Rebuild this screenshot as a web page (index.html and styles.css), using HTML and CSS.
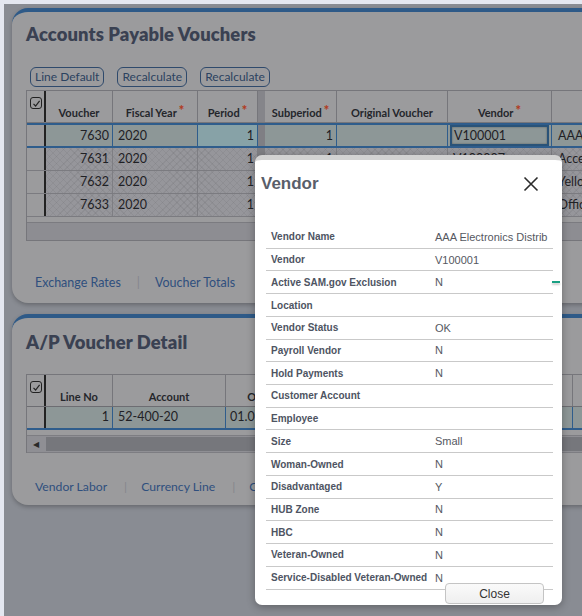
FILE: index.html
```html
<!DOCTYPE html>
<html>
<head>
<meta charset="utf-8">
<link rel="stylesheet" href="styles.css">
</head>
<body>
<div class="stage">
  <section class="panel p1">
    <h1 class="ptitle t1">Accounts Payable Vouchers</h1>
    <div class="btns">
      <button class="btn">Line Default</button>
      <button class="btn">Recalculate</button>
      <button class="btn">Recalculate</button>
    </div>
    <div class="grid g1">
      <div class="row head">
        <div class="c chk"><span class="cb"><svg width="9" height="9" viewBox="0 0 9 9"><path d="M1.5 4.8 L3.6 7 L7.6 1.8" fill="none" stroke="#222" stroke-width="1.2"/></svg></span></div>
        <div class="c w-v">Voucher</div>
        <div class="c w-fy">Fiscal Year<i>*</i></div>
        <div class="c w-p">Period<i>*</i></div>
        <div class="c split"></div>
        <div class="c w-sp">Subperiod<i>*</i></div>
        <div class="c w-ov">Original Voucher</div>
        <div class="c w-vn">Vendor<i>*</i></div>
        <div class="c w-d"></div>
      </div>
      <div class="row sel">
        <div class="c chk"></div>
        <div class="c w-v r">7630</div>
        <div class="c w-fy">2020</div>
        <div class="c w-p r cur">1</div>
        <div class="c split"></div>
        <div class="c w-sp r">1</div>
        <div class="c w-ov"></div>
        <div class="c w-vn"><span class="inp">V100001</span></div>
        <div class="c w-d pad">AAA</div>
      </div>
      <div class="row dat">
        <div class="c chk"></div>
        <div class="c w-v r">7631</div>
        <div class="c w-fy">2020</div>
        <div class="c w-p r">1</div>
        <div class="c split"></div>
        <div class="c w-sp r">1</div>
        <div class="c w-ov"></div>
        <div class="c w-vn">V100007</div>
        <div class="c w-d pad">Accessories</div>
      </div>
      <div class="row dat">
        <div class="c chk"></div>
        <div class="c w-v r">7632</div>
        <div class="c w-fy">2020</div>
        <div class="c w-p r">1</div>
        <div class="c split"></div>
        <div class="c w-sp r">1</div>
        <div class="c w-ov"></div>
        <div class="c w-vn">V100010</div>
        <div class="c w-d pad">Yellow</div>
      </div>
      <div class="row dat">
        <div class="c chk"></div>
        <div class="c w-v r">7633</div>
        <div class="c w-fy">2020</div>
        <div class="c w-p r">1</div>
        <div class="c split"></div>
        <div class="c w-sp r">1</div>
        <div class="c w-ov"></div>
        <div class="c w-vn">V100012</div>
        <div class="c w-d pad">Office</div>
      </div>
      <div class="blank"></div>
      <div class="gfoot"></div>
    </div>
    <div class="links l1">
      <a>Exchange Rates</a><span class="sep">|</span><a>Voucher Totals</a>
    </div>
  </section>

  <section class="panel p2">
    <h1 class="ptitle t2">A/P Voucher Detail</h1>
    <div class="grid g2">
      <div class="row head">
        <div class="c chk"><span class="cb"><svg width="9" height="9" viewBox="0 0 9 9"><path d="M1.5 4.8 L3.6 7 L7.6 1.8" fill="none" stroke="#222" stroke-width="1.2"/></svg></span></div>
        <div class="c w-v">Line No</div>
        <div class="c w-ac">Account</div>
        <div class="c w-or">Organization</div>
        <div class="c w-ds">Description</div>
        <div class="c w-d"></div>
      </div>
      <div class="row sel s2">
        <div class="c chk"></div>
        <div class="c w-v r">1</div>
        <div class="c w-ac">52-400-20</div>
        <div class="c w-or">01.02.03</div>
        <div class="c w-ds"></div>
        <div class="c w-d"></div>
      </div>
      <div class="hscroll"><span class="arrow">&#9664;</span><span class="thumb"></span></div>
    </div>
    <div class="links l2">
      <a>Vendor Labor</a><span class="sep">|</span><a>Currency Line</a><span class="sep">|</span><a>Commitments</a>
    </div>
  </section>

  <div class="modal">
    <div class="mhead">
      <h2 class="mtitle">Vendor</h2>
      <svg class="mx" width="16" height="16" viewBox="0 0 16 16"><path d="M1.5 1.5 L14.5 14.5 M14.5 1.5 L1.5 14.5" stroke="#2b2b2b" stroke-width="1.6" fill="none"/></svg>
    </div>
    <div class="mtable">
      <div class="mrow"><span class="ml">Vendor Name</span><span class="mv">AAA Electronics Distrib</span></div>
      <div class="mrow"><span class="ml">Vendor</span><span class="mv">V100001</span></div>
      <div class="mrow"><span class="ml">Active SAM.gov Exclusion</span><span class="mv">N</span></div>
      <div class="mrow"><span class="ml">Location</span><span class="mv"></span></div>
      <div class="mrow"><span class="ml">Vendor Status</span><span class="mv">OK</span></div>
      <div class="mrow"><span class="ml">Payroll Vendor</span><span class="mv">N</span></div>
      <div class="mrow"><span class="ml">Hold Payments</span><span class="mv">N</span></div>
      <div class="mrow"><span class="ml">Customer Account</span><span class="mv"></span></div>
      <div class="mrow"><span class="ml">Employee</span><span class="mv"></span></div>
      <div class="mrow"><span class="ml">Size</span><span class="mv">Small</span></div>
      <div class="mrow"><span class="ml">Woman-Owned</span><span class="mv">N</span></div>
      <div class="mrow"><span class="ml">Disadvantaged</span><span class="mv">Y</span></div>
      <div class="mrow"><span class="ml">HUB Zone</span><span class="mv">N</span></div>
      <div class="mrow"><span class="ml">HBC</span><span class="mv">N</span></div>
      <div class="mrow"><span class="ml">Veteran-Owned</span><span class="mv">N</span></div>
      <div class="mrow"><span class="ml">Service-Disabled Veteran-Owned</span><span class="mv">N</span></div>
    </div>
    <span class="dash"></span>
    <button class="mclose">Close</button>
  </div>
</div>
</body>
</html>
```

FILE: styles.css
```css
* { box-sizing: border-box; }
html, body { margin: 0; padding: 0; }
body {
  background: #e4e7f0;
  width: 582px;
  height: 616px;
  overflow: hidden;
  font-family: Lato, "Noto Sans", sans-serif;
}
.stage {
  position: relative;
  margin: 4px 0 0 4px;
  height: 612px;
  background: #898c93;
  overflow: hidden;
  padding-top: 4px;
}
.panel {
  margin-left: 8px;
  width: 640px;
  background: #9b9b9d;
  border-top: 4px solid #2e5a88;
  border-radius: 16px 0 0 16px;
  box-shadow: 0 2px 4px rgba(0,0,0,0.25);
  padding-left: 14px;
}
.p1 { height: 295px; padding-top: 11px; }
.p2 { margin-top: 11px; height: 191px; padding-top: 13px; }
.ptitle {
  margin: 0;
  font-size: 18.4px;
  line-height: 22px;
  font-weight: 800;
  color: #3a4152;
  letter-spacing: 0.1px;
}
.btns {
  display: flex;
  gap: 13px;
  margin-top: 22px;
  padding-left: 4px;
}
.btn {
  height: 20px;
  padding: 0 4px;
  font-family: Lato, sans-serif;
  font-size: 12px;
  color: #2b4260;
  background: transparent;
  border: 1px solid #2f4a6c;
  border-radius: 6px;
  line-height: 18px;
}
.grid {
  margin-top: 3px;
  border-left: 1px solid #76767b;
  border-top: 1px solid #76767b;
  font-size: 12.5px;
  color: #1f2125;
}
.g2 { margin-top: 21px; }
.row { display: flex; }
.c {
  flex: none;
  border-right: 1px solid #76767b;
  white-space: nowrap;
  overflow: hidden;
  padding: 0 5px;
}
.head { height: 32px; border-bottom: 1px solid #76767b; }
.head .c {
  display: flex;
  align-items: flex-end;
  justify-content: center;
  padding-bottom: 3px;
  font-weight: 700;
  font-size: 11px;
  color: #24262b;
}
.head .c i { font-style: normal; font-weight: 900; color: #b13a22; font-size: 13px; margin-left: 2px; position: relative; top: -1px; }
.head .chk { align-items: flex-start; justify-content: flex-start; padding: 6px 0 0 3px; }
.cb {
  display: flex;
  align-items: center;
  justify-content: center;
  width: 12px;
  height: 12px;
  border: 1.2px solid #222;
  border-radius: 3px;
}
.chk { width: 19px; padding: 0; border-right: 2px solid #222; }
.w-v { width: 67px; }
.w-fy { width: 85px; }
.w-p { width: 60px; }
.split { width: 7px; padding: 0; background: #7f7f84; border-right: none; }
.head .split { background: #85858a; }
.w-sp { width: 72px; }
.w-ov { width: 111px; }
.w-vn { width: 104px; }
.w-d { width: 140px; }
.w-ac { width: 113px; }
.w-or { width: 108px; padding-left: 4px; }
.w-ds { width: 239px; }
.r { text-align: right; padding-right: 3px; }
.pad { padding-left: 6px; }

.sel {
  height: 25px;
  line-height: 21px;
  background: #8d9797;
  border-top: 2px solid #2f5d8c;
  border-bottom: 2px solid #2f5d8c;
}
.sel .c { border-right-color: #2f5d8c; }
.sel .chk { background: #9b9b9d; border-right-color: #222; }
.sel .split { background: #7f7f84; }
.sel .cur { background: #87a2a7; }
.inp {
  display: block;
  margin: 0 -3px;
  height: 21px;
  border: 2px solid #2a5378;
  box-shadow: inset 0 0 2px rgba(0,0,0,0.4);
  padding-left: 2px;
  line-height: 17px;
}
.dat {
  height: 23px;
  line-height: 22px;
  border-bottom: 1px solid #7b7b80;
  background-color: #96969b;
  background-image:
    repeating-linear-gradient(45deg, rgba(0,0,0,0.05) 0 1px, transparent 1px 5px),
    repeating-linear-gradient(-45deg, rgba(0,0,0,0.05) 0 1px, transparent 1px 5px);
}
.dat .chk { background: #9b9b9d; }
.dat .c { border-right-color: #7e7e83; }
.dat .chk { border-right-color: #222; }
.blank { height: 6px; border-bottom: 1px solid #7b7b80; }
.gfoot { height: 18px; background: #8d8d92; border-bottom: 1px solid #76767b; }

.s2 { height: 23px; line-height: 19px; border-top: none; }
.g2 .head { height: 32px; border-bottom: 1px solid #6d6d72; }
.hscroll {
  display: flex;
  align-items: center;
  height: 18px;
  margin-top: 5px;
  background: #8f8f94;
  border-top: 1px solid #7d7d82;
  border-bottom: 1px solid #7d7d82;
}
.arrow { width: 19px; padding-left: 6px; font-size: 8px; color: #2a2a2a; }
.thumb { flex: none; width: 560px; height: 14px; background: #76777c; }

.links {
  display: flex;
  align-items: center;
  padding-left: 9px;
  font-size: 12.5px;
  color: #2f4f7e;
  height: 15px;
}
.l1 { margin-top: 34px; }
.l2 { margin-top: 26px; width: 229px; overflow: hidden; white-space: nowrap; font-size: 12.2px; }
.links a { display: block; flex: none; }
.sep { color: #85868c; padding: 0 15px 0 16px; }
.l2 .sep { padding: 0 14px 0 17px; }

.modal {
  position: absolute;
  left: 251px;
  top: 151px;
  width: 307px;
  height: 450px;
  background: #fff;
  border-top: 5px solid #d2d2d2;
  border-radius: 7px;
  box-shadow: 0 2px 8px rgba(0,0,0,0.3);
  font-family: "Liberation Sans", Arial, sans-serif;
}
.mhead {
  display: flex;
  align-items: center;
  justify-content: space-between;
  height: 48px;
  padding: 0 23px 0 6px;
}
.mtitle { margin: 0; font-size: 17px; font-weight: 700; color: #595e6a; }
.mtable { margin: 18px 0 0 11px; width: 287px; }
.mrow {
  display: flex;
  align-items: center;
  height: 22.73px;
  border-bottom: 1px solid #c9c9c9;
}
.ml {
  flex: none;
  width: 169px;
  padding-left: 5px;
  font-size: 10px;
  font-weight: 700;
  color: #4e5462;
  white-space: nowrap;
}
.mv { font-size: 11px; color: #55585f; white-space: nowrap; }
.dash {
  position: absolute;
  left: 297px;
  top: 121px;
  width: 8px;
  height: 2px;
  background: #19a083;
  box-shadow: 0 2px 2px rgba(0,0,0,0.2);
}
.mclose {
  position: absolute;
  right: 18px;
  bottom: 1px;
  width: 99px;
  height: 21px;
  background: linear-gradient(#fafafa, #efefef);
  border: 1px solid #c4c4c4;
  border-radius: 4px;
  font-family: "Liberation Sans", Arial, sans-serif;
  font-size: 12px;
  color: #333;
}
```
